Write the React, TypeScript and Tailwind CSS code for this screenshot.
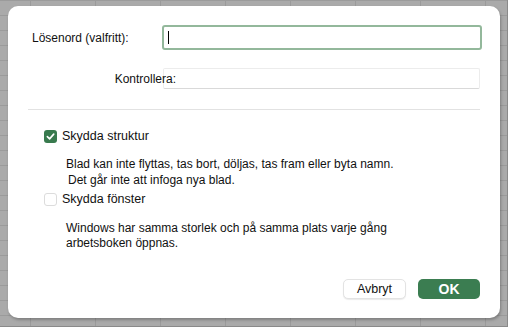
import React from 'react';

const font = { fontFamily: '"Liberation Sans", Arial, sans-serif' };

function Checkbox({ checked }: { checked: boolean }) {
  if (!checked) {
    return <span className="block h-[13px] w-[13px] rounded-[3px] border border-[#dcdcdc] bg-white" />;
  }
  return (
    <span className="flex h-[13px] w-[13px] items-center justify-center rounded-[3px] bg-[#387a4e]">
      <svg width="9" height="9" viewBox="0 0 10 10" fill="none">
        <path d="M1.5 5.2 L4 7.6 L8.6 2.4" stroke="white" strokeWidth="1.8" strokeLinecap="round" strokeLinejoin="round" />
      </svg>
    </span>
  );
}

export default function App() {
  return (
    <div
      className="relative h-[327px] w-[508px] overflow-hidden border-r border-b border-[#8a8a8a] bg-[#aaaaaa] bg-[linear-gradient(to_right,#9b9b9b_1px,transparent_1px),linear-gradient(to_bottom,#9b9b9b_1px,transparent_1px)] bg-size-[65px_15px] bg-[position:30px_0px] text-[12px] text-[#111]"
      style={font}
    >
      {/* dialog */}
      <div className="absolute left-[8px] top-[6px] flex h-[312px] w-[492px] flex-col rounded-[10px] bg-white shadow-[1px_2px_3px_rgba(0,0,0,0.25)]">
        {/* password */}
        <div className="mt-[19px] flex h-[25px] items-center pl-[24px] pr-[18px]">
          <span className="w-[130px] whitespace-nowrap">Lösenord (valfritt):</span>
          <div className="flex h-[25px] flex-1 items-center rounded-[3px] border-[2.5px] border-[#93b89b] pl-[4px]">
            <span className="block h-[13px] w-px bg-black" />
          </div>
        </div>

        {/* verify */}
        <div className="mt-[18px] flex h-[21px] items-center pl-[24px] pr-[20px]">
          <div className="relative z-10 flex w-[131px] justify-end">
            <span className="-mr-[13px] whitespace-nowrap">Kontrollera:</span>
          </div>
          <div className="h-[21px] flex-1 rounded-[2px] border border-[#ececec] border-b-[#d9d9d9] bg-white" />
        </div>

        <div className="mx-[20px] mt-[20px] h-px bg-[#e2e2e2]" />

        {/* protect structure */}
        <div className="mt-[17px] flex items-center gap-[5px] pl-[36px]">
          <Checkbox checked />
          <span className="text-[12.5px]">Skydda struktur</span>
        </div>
        <div className="mt-[10px] pl-[58px] leading-[16px]">
          <div>Blad kan inte flyttas, tas bort, döljas, tas fram eller byta namn.</div>
          <div className="pl-[2px]">Det går inte att infoga nya blad.</div>
        </div>

        {/* protect windows */}
        <div className="mt-[2px] flex items-center gap-[5px] pl-[36px]">
          <Checkbox checked={false} />
          <span className="text-[12.5px]">Skydda fönster</span>
        </div>
        <div className="mt-[12px] pl-[58px] leading-[15px]">
          <div>Windows har samma storlek och på samma plats varje gång</div>
          <div>arbetsboken öppnas.</div>
        </div>

        {/* buttons */}
        <div className="mt-auto mb-[19px] flex justify-end gap-[12px] pr-[20px]">
          <button className="h-[20px] w-[63px] rounded-[5px] border border-[#e3e3e3] bg-white text-[12.5px] text-[#111] shadow-[0_1px_1px_rgba(0,0,0,0.08)]">
            Avbryt
          </button>
          <button className="h-[20px] w-[62px] rounded-[5px] bg-[#3b7d51] text-[14px] font-bold text-white">
            OK
          </button>
        </div>
      </div>
    </div>
  );
}
